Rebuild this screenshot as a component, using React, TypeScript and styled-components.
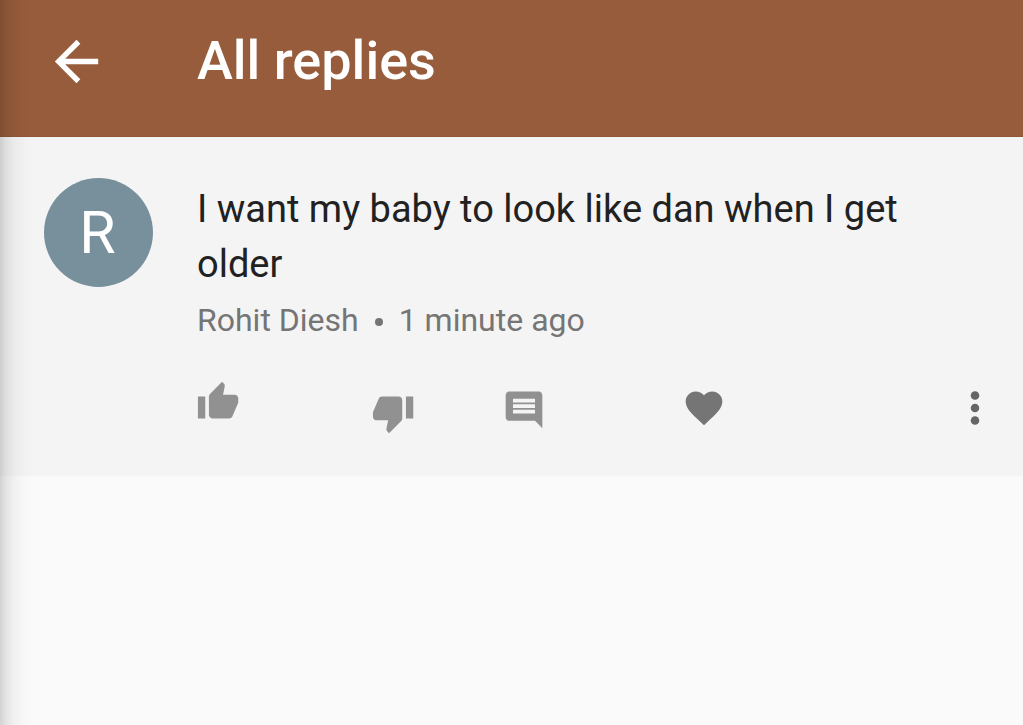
import React from "react";
import styled, { createGlobalStyle } from "styled-components";

const GlobalStyle = createGlobalStyle`
  * { box-sizing: border-box; }
  html { background: #fafafa; }
  body { margin: 0; font-family: Roboto, "Liberation Sans", sans-serif; }
`;

const Page = styled.div`
  position: relative;
  min-height: 100vh;
  background: #fafafa;
`;

const EdgeShadow = styled.div`
  position: absolute;
  top: 0;
  bottom: 0;
  left: 0;
  width: 32px;
  pointer-events: none;
  background: linear-gradient(
    to right,
    rgba(0, 0, 0, 0.16) 0,
    rgba(0, 0, 0, 0.09) 6px,
    rgba(0, 0, 0, 0.04) 14px,
    rgba(0, 0, 0, 0.01) 24px,
    rgba(0, 0, 0, 0) 32px
  );
`;

const AppBar = styled.header`
  display: grid;
  grid-template-columns: 109px 1fr;
  column-gap: 44px;
  align-items: center;
  padding: 24px 24px 38px 44px;
  border-bottom: 1px solid #8f5836;
  background: #975c3b;
  color: #fff;
`;

const Title = styled.h1`
  margin: 0;
  font-size: 54px;
  line-height: 74px;
  font-weight: 500;
`;

const IconButton = styled.button<{ $size: number; $color: string }>`
  display: block;
  flex: none;
  width: ${(p) => p.$size}px;
  height: ${(p) => p.$size}px;
  padding: 0;
  border: 0;
  background: none;
  color: ${(p) => p.$color};
  cursor: pointer;

  svg {
    display: block;
    width: 100%;
    height: 100%;
    fill: currentColor;
  }
`;

const Comment = styled.article`
  display: grid;
  grid-template-columns: 109px 1fr;
  column-gap: 44px;
  padding: 41px 23px 41px 44px;
  background: #f4f4f4;
`;

const Avatar = styled.div`
  display: flex;
  align-items: center;
  justify-content: center;
  width: 109px;
  height: 109px;
  padding-right: 2px;
  border-radius: 50%;
  background: #78909c;
  color: #fff;
  font-size: 59px;
  line-height: 64px;
`;

const Message = styled.p`
  margin: 4px 0 0;
  max-width: 740px;
  color: #212121;
  font-size: 38px;
  line-height: 55px;
`;

const Meta = styled.div`
  display: flex;
  gap: 16px;
  margin-top: 8px;
  color: #757575;
  font-size: 32px;
  line-height: 40px;
`;

const Dot = styled.span`
  align-self: center;
  width: 8px;
  height: 8px;
  margin-top: 4px;
  border-radius: 50%;
  background: currentColor;
`;

const Actions = styled.div`
  display: flex;
  align-items: center;
  height: 55px;
  margin-top: 40px;
`;

const Action = styled.div<{ $width?: number; $align?: string }>`
  width: ${(p) => (p.$width ? `${p.$width}px` : "auto")};
  align-self: ${(p) => p.$align ?? "center"};
`;

const Overflow = styled.div`
  margin-left: auto;
`;

const GREY = "#919191";

export default function App() {
  return (
    <Page>
      <GlobalStyle />
      <AppBar>
        <IconButton type="button" aria-label="Back" $size={65} $color="#fff">
          <svg viewBox="0 0 24 24">
            <path d="M20 10.95H7.83l5.59-5.54L12 4l-8 8 8 8 1.41-1.41L7.83 13.05H20z" />
          </svg>
        </IconButton>
        <Title>All replies</Title>
      </AppBar>
      <main>
        <Comment>
          <Avatar>R</Avatar>
          <div>
            <Message>I want my baby to look like dan when I get older</Message>
            <Meta>
              <span>Rohit Diesh</span>
              <Dot />
              <span>1 minute ago</span>
            </Meta>
            <Actions>
              <Action $width={175} $align="flex-start">
                <IconButton type="button" aria-label="Like" $size={44} $color={GREY}>
                  <svg viewBox="0.5 0 24 24">
                    <path d="M1 21h4V9H1v12zm22-11c0-1.1-.9-2-2-2h-6.310l.95-4.570.03-.32c0-.41-.17-.79-.44-1.060L14.170 1 7.590 7.590C7.220 7.950 7 8.450 7 9v10c0 1.100.9 2 2 2h9c.83 0 1.540-.5 1.840-1.220l3.020-7.050c.09-.23.14-.47.14-.73v-2z" />
                  </svg>
                </IconButton>
              </Action>
              <Action $width={130} $align="flex-end">
                <IconButton type="button" aria-label="Dislike" $size={44} $color={GREY}>
                  <svg viewBox="0.5 0 24 24">
                    <path d="M15 3H6c-.83 0-1.540.5-1.840 1.220l-3.020 7.050c-.09.23-.14.47-.14.73v2c0 1.100.9 2 2 2h6.310l-.95 4.570-.03.32c0 .41.17.79.44 1.060L9.830 23l6.590-6.590c.36-.36.58-.86.58-1.410V5c0-1.100-.9-2-2-2zm4 0v12h4V3h-4z" />
                  </svg>
                </IconButton>
              </Action>
              <Action $width={180}>
                <IconButton type="button" aria-label="Reply" $size={44} $color={GREY}>
                  <svg viewBox="0 -1 24 24">
                    <path d="M21.99 4c0-1.100-.89-2-1.990-2H4c-1.100 0-2 .9-2 2v12c0 1.100.9 2 2 2h14l4 4-.01-18zM18 14H6v-2h12v2zm0-3H6V9h12v2zm0-3H6V6h12v2z" />
                  </svg>
                </IconButton>
              </Action>
              <Action>
                <IconButton type="button" aria-label="Love" $size={44} $color="#757575">
                  <svg viewBox="0 0 24 24">
                    <path d="M12 21.350l-1.450-1.320C5.400 15.360 2 12.280 2 8.500 2 5.420 4.420 3 7.500 3c1.740 0 3.410.81 4.500 2.090C13.090 3.810 14.760 3 16.500 3 19.580 3 22 5.420 22 8.500c0 3.780-3.400 6.860-8.550 11.540L12 21.350z" />
                  </svg>
                </IconButton>
              </Action>
              <Overflow>
                <IconButton type="button" aria-label="More options" $size={50} $color="#666">
                  <svg viewBox="0 0 24 24">
                    <circle cx="12" cy="6" r="2.05" />
                    <circle cx="12" cy="12" r="2.05" />
                    <circle cx="12" cy="18" r="2.05" />
                  </svg>
                </IconButton>
              </Overflow>
            </Actions>
          </div>
        </Comment>
      </main>
      <EdgeShadow />
    </Page>
  );
}
